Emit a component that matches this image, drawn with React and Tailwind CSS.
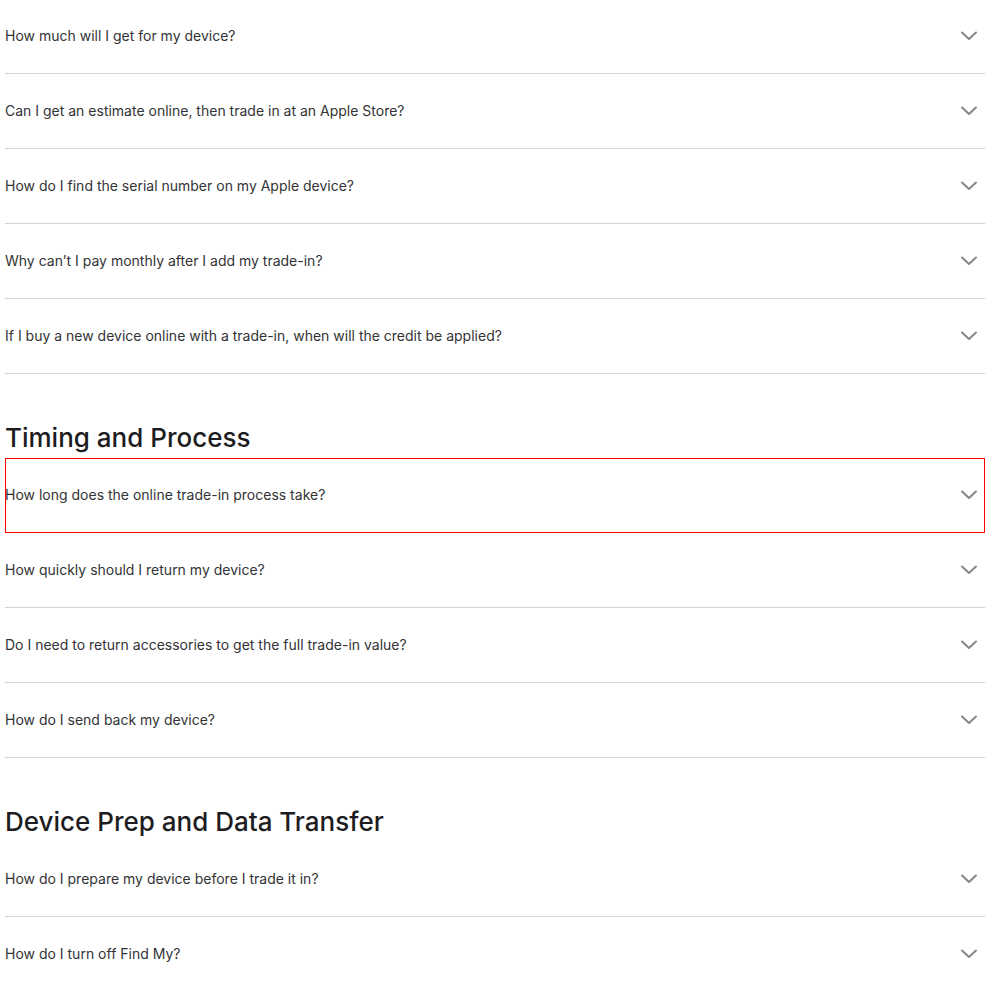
import React from "react";

const sections = [
  {
    title: null,
    items: [
      "How much will I get for my device?",
      "Can I get an estimate online, then trade in at an Apple Store?",
      "How do I find the serial number on my Apple device?",
      "Why can\u2019t I pay monthly after I add my trade-in?",
      "If I buy a new device online with a trade-in, when will the credit be applied?",
    ],
  },
  {
    title: "Timing and Process",
    items: [
      "How long does the online trade-in process take?",
      "How quickly should I return my device?",
      "Do I need to return accessories to get the full trade-in value?",
      "How do I send back my device?",
    ],
  },
  {
    title: "Device Prep and Data Transfer",
    items: [
      "How do I prepare my device before I trade it in?",
      "How do I turn off Find My?",
    ],
  },
];

const Chevron = () => (
  <svg width="18" height="10" viewBox="0 0 18 10" fill="none" className="shrink-0">
    <path d="M2 1.5 L9 8 L16 1.5" stroke="#86868b" strokeWidth="2" strokeLinecap="round" strokeLinejoin="round" />
  </svg>
);

const FaqRow = ({ text, focused }) => (
  <button
    className={
      "w-full h-[75px] flex items-center justify-between border-b border-[#d2d2d7] text-left " +
      (focused ? "outline outline-1 outline-[#ff0000] -outline-offset-1" : "")
    }
  >
    <span className="text-[14px] leading-5 text-[#333336]">{text}</span>
    <span className="pr-[7px]">
      <Chevron />
    </span>
  </button>
);

export default function App() {
  return (
    <div className="min-h-screen bg-white font-['Inter','Liberation_Sans',sans-serif]">
      <div className="px-[5px] w-[990px] -mt-px">
        {sections.map((s, si) => (
          <section key={si}>
            {s.title && (
              <h2 className="pt-12 pb-1 text-[26px] leading-8 font-medium text-[#1d1d1f]">
                {s.title}
              </h2>
            )}
            {s.items.map((q, qi) => (
              <FaqRow key={q} text={q} focused={si === 1 && qi === 0} />
            ))}
          </section>
        ))}
      </div>
    </div>
  );
}
